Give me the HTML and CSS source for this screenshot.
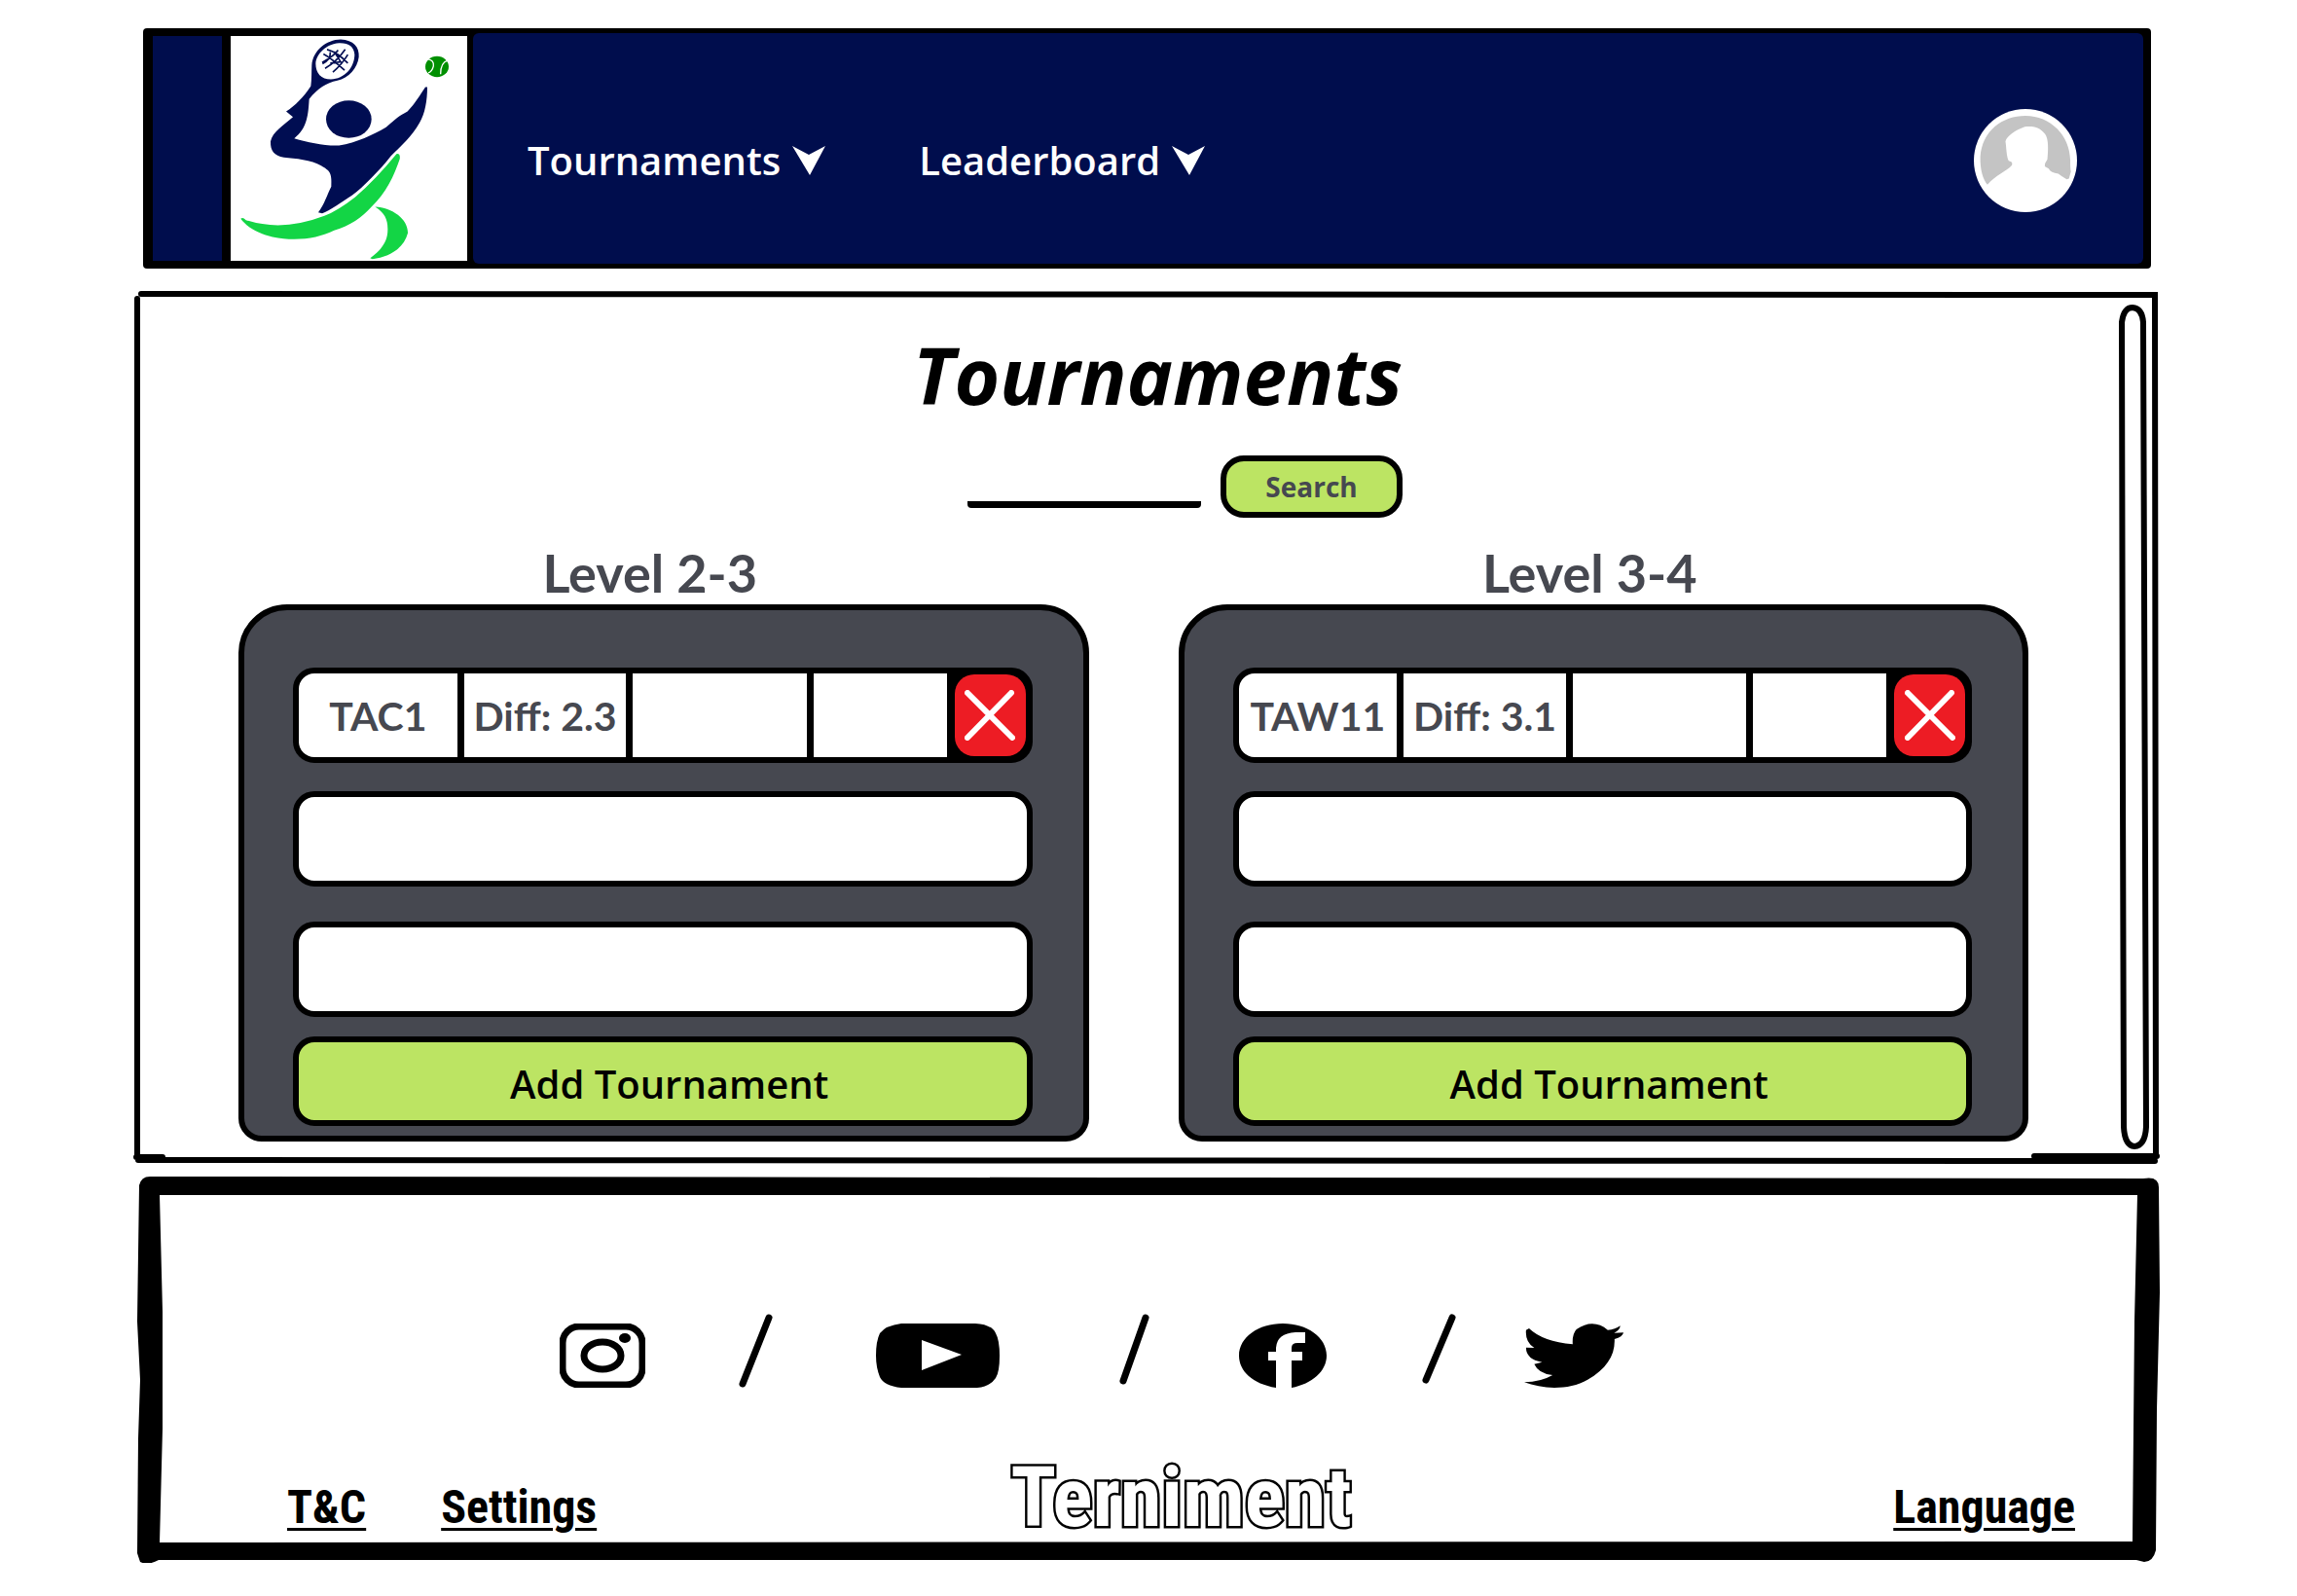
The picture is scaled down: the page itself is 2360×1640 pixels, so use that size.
FILE: index.html
```html
<!DOCTYPE html>
<html lang="en">
<head>
<meta charset="utf-8">
<meta name="viewport" content="width=device-width, initial-scale=1">
<title>Terniment – Tournaments</title>
<link rel="stylesheet" href="styles.css">
</head>
<body>
<div class="page">
  <header class="header">
    <div class="header-stub"></div>
    <a class="brand" href="#" aria-label="Terniment home">
      <svg class="brand-logo" viewBox="321 52 729 690" aria-hidden="true">
        <g fill="#000d52">
          <path fill-rule="evenodd" d="M568 205C571 185 570 160 571 140C575 95 615 62 660 61C700 63 718 85 716 115C712 150 685 180 650 188C615 195 590 212 563 245C560 290 558 335 517 366C560 378 610 390 655 388C710 380 760 355 800 332C830 305 840 297 866 283C890 258 905 232 921 208L927 208C927 250 920 290 903 318C880 360 845 390 815 420C780 465 730 515 695 542C665 562 625 590 603 597L591 594C610 570 618 540 631 515C634 470 625 465 600 450C570 433 520 428 485 425C455 418 443 405 444 375C450 345 485 325 513 300L492 283C520 265 545 240 568 205ZM583 135C583 165 600 184 630 184C672 182 702 148 703 108C702 84 685 71 655 72C615 75 585 105 583 135Z"/>
          <ellipse cx="685" cy="307" rx="70" ry="58"/>
        </g>
        <path d="M607 106Q630 118 672 156M618 92Q650 100 682 134M603 132Q640 112 652 94M612 150Q646 132 674 92M636 162Q664 138 682 108M628 100Q630 122 604 136M640 98L660 130L628 134" fill="none" stroke="#000d52" stroke-width="5"/>
        <g fill="#13d545">
          <path d="M352 614Q358 608 368 618Q480 655 610 605Q650 590 705 547Q770 490 832 414Q845 412 842 430C825 480 800 535 755 577C725 610 690 635 640 650C590 675 520 685 450 670C410 660 370 640 352 614Z"/>
          <path d="M766 577C820 580 868 615 867 658C855 705 810 732 758 738L751 735C785 710 806 685 805 645C805 615 795 595 766 577Z"/>
        </g>
        <ellipse cx="957" cy="145" rx="36" ry="32" fill="#008f00"/>
        <path d="M930 122Q948 125 946 143Q942 160 930 164M990 126Q968 132 968 168" fill="none" stroke="#fff" stroke-width="4"/>
      </svg>
    </a>
    <nav class="nav">
      <ul class="nav-list">
        <li><a class="nav-link" href="#">Tournaments
          <svg class="nav-arrow" viewBox="0 0 34 30" aria-hidden="true"><path d="M0 0L17 9L34 0L18 30Z" fill="#fff"/></svg></a></li>
        <li><a class="nav-link" href="#">Leaderboard
          <svg class="nav-arrow" viewBox="0 0 34 30" aria-hidden="true"><path d="M0 0L17 9L34 0L18 30Z" fill="#fff"/></svg></a></li>
      </ul>
      <a class="avatar" href="#" aria-label="Profile">
        <svg viewBox="142 272 320 320" aria-hidden="true">
          <circle cx="302" cy="432" r="160" fill="#fff"/>
          <path d="M184 507C170 490 161 460 162 420C168 340 230 293 302 293C380 293 440 355 441 430Q441 460 443 466L437 488L430 490Q415 482 404 473Q380 470 374 457L362 450Q361 440 370 428C375 380 370 360 363 350C345 325 320 325 300 327C270 338 245 355 240 372C243 390 243 420 250 433Q264 436 260 446C245 465 210 475 184 507Z" fill="#c4c4c4"/>
        </svg>
      </a>
    </nav>
  </header>

  <main class="main">
    <div class="content">
      <div class="hero">
        <h1 class="title">Tournaments</h1>
        <form class="search">
          <input class="search-input" type="text" aria-label="Search tournaments">
          <button class="search-button" type="button">Search</button>
        </form>
      </div>
      <div class="levels">
        <section class="level">
          <h2 class="level-title">Level 2-3</h2>
          <div class="card">
            <ul class="rows">
              <li class="row row-filled">
                <span class="cell">TAC1</span><span class="cell">Diff: 2.3</span><span class="cell"></span><span class="cell"></span>
                <button class="remove" type="button" aria-label="Remove TAC1"><svg viewBox="0 0 52 52" aria-hidden="true"><path d="M3 3L49 49M48 3L3 49"/></svg></button>
              </li>
              <li class="row"></li>
              <li class="row row-last"></li>
            </ul>
            <button class="add" type="button">Add Tournament</button>
          </div>
        </section>
        <section class="level">
          <h2 class="level-title">Level 3-4</h2>
          <div class="card">
            <ul class="rows">
              <li class="row row-filled">
                <span class="cell">TAW11</span><span class="cell">Diff: 3.1</span><span class="cell"></span><span class="cell"></span>
                <button class="remove" type="button" aria-label="Remove TAW11"><svg viewBox="0 0 52 52" aria-hidden="true"><path d="M3 3L49 49M48 3L3 49"/></svg></button>
              </li>
              <li class="row"></li>
              <li class="row row-last"></li>
            </ul>
            <button class="add" type="button">Add Tournament</button>
          </div>
        </section>
      </div>
    </div>
    <svg class="scroll" viewBox="0 0 32 868" preserveAspectRatio="none" aria-hidden="true">
      <path d="M4 18Q6 3 15 3Q25 4 26 18L29 845Q28 864 17 865Q7 864 6 845L5 500Z"/>
    </svg>
  </main>

  <footer class="footer">
    <div class="social">
      <a href="#" aria-label="Instagram"><svg width="88" height="66" viewBox="0 0 88 66"><g fill="none" stroke="#000"><rect x="3" y="3" width="82" height="60" rx="17" stroke-width="7"/><ellipse cx="44" cy="33" rx="19" ry="14" stroke-width="7"/></g><ellipse cx="67" cy="15" rx="6" ry="5"/></svg></a>
      <svg class="slash slash-1" width="35" height="76" viewBox="0 0 35 76" aria-hidden="true"><path d="M4 72L31 4"/></svg>
      <a href="#" aria-label="YouTube"><svg width="127" height="66" viewBox="0 0 127 66"><path fill-rule="evenodd" d="M26 0H102Q119 1 123 10Q127 17 127 33Q127 50 123 56Q117 65 104 66H26Q8 64 4 55Q0 45 0 33Q0 18 4 10Q10 2 26 0ZM47 17V48L88 32Z"/></svg></a>
      <svg class="slash slash-2" width="31" height="76" viewBox="0 0 31 76" aria-hidden="true"><path d="M4 69L27 4"/></svg>
      <a href="#" aria-label="Facebook"><svg width="90" height="66" viewBox="0 0 90 66"><path d="M38 66C14 62 0 49 0 33C0 14 20 0 45 0C70 0 90 14 90 33C90 49 75 62 54 66V38H65V29H54V25Q54 20 60 20H68V9H58Q39 10 38 25V29H30V38H38Z"/></svg></a>
      <svg class="slash slash-3" width="35" height="76" viewBox="0 0 35 76" aria-hidden="true"><path d="M4 68L31 4"/></svg>
      <a href="#" aria-label="Twitter"><svg width="102" height="66" viewBox="1140 122 266 198" preserveAspectRatio="none"><path d="M1153 137Q1190 178 1270 186Q1268 155 1280 140Q1325 105 1364 142Q1384 141 1397 129Q1398 140 1381 151L1406 150Q1404 164 1382 170C1384 220 1360 262 1310 295C1260 328 1190 325 1140 303Q1185 302 1216 281Q1178 276 1167 247L1188 241Q1145 232 1145 196L1167 197Q1142 180 1145 142Z"/></svg></a>
    </div>
    <div class="footer-bar">
      <div class="footer-links">
        <a class="footer-link" href="#">T&amp;C</a>
        <a class="footer-link" href="#">Settings</a>
      </div>
      <div class="wordmark">Terniment</div>
      <div class="footer-links footer-links-end">
        <a class="footer-link" href="#">Language</a>
      </div>
    </div>
  </footer>
</div>
</body>
</html>
```
FILE: styles.css
```css
:root {
  --navy: #000d4d;
  --slate: #464850;
  --lime: #bce463;
  --red: #ed1c24;
}

* { box-sizing: border-box; }

body {
  margin: 0;
  background: #fff;
  color: #000;
  font-family: "Open Sans", "Noto Sans", sans-serif;
}

svg { display: block; }
ul { list-style: none; margin: 0; padding: 0; }
a { color: inherit; }
button { font: inherit; cursor: pointer; }

.page { padding: 29px 140px 34px 136px; }

/* Header */
.header {
  display: flex;
  margin: 0 10px 0 11px;
  padding: 5px 8px 5px 10px;
  background: #000;
  border-radius: 4px;
}
.header-stub { width: 71px; margin: 3px 9px 3px 0; background: var(--navy); }
.brand { margin: 3px 6px 3px 0; background: #fff; }
.brand-logo { width: 243px; height: 231px; }
.nav {
  flex: 1;
  display: flex;
  align-items: center;
  justify-content: space-between;
  padding: 24px 68px 0 56px;
  background: var(--navy);
  border-radius: 6px;
}
.nav-list { display: flex; gap: 96px; }
.nav-link {
  display: flex;
  align-items: center;
  gap: 12px;
  color: #fff;
  font-size: 40px;
  line-height: 56px;
  font-weight: 600;
  text-decoration: none;
}
.nav-arrow { width: 34px; height: 30px; }
.avatar { width: 106px; height: 106px; }

/* Main panel, drawn with a loose pen outline */
.main {
  display: flex;
  margin-top: 23px;
  padding: 14px 12px 16px 109px;
  background: url("data:image/svg+xml,%3Csvg xmlns='http://www.w3.org/2000/svg' viewBox='0 0 2084 898' preserveAspectRatio='none'%3E%3Cg fill='none' stroke='%23000' stroke-width='6' stroke-linecap='round'%3E%3Cpath d='M9 3L2078 4L2079 888M5 8L5 889M6 893L2078 894M4 890L31 890M1954 889L2080 889'/%3E%3C/g%3E%3C/svg%3E") center / 100% 100% no-repeat;
}
.content { flex: 1; padding-right: 92px; }
.scroll { width: 32px; height: auto; align-self: stretch; fill: none; stroke: #000; stroke-width: 6; }
.hero { width: fit-content; margin: 20px auto 0; padding-left: 50px; }
.title { margin: 0; font-size: 80px; line-height: 104px; font-style: italic; font-weight: 700; }
.search { display: flex; justify-content: flex-end; gap: 20px; margin-top: 31px; }
.search-input {
  width: 240px;
  height: 54px;
  padding: 0 8px;
  border: 0;
  background: linear-gradient(#000, #000) bottom / 100% 7px no-repeat;
  border-radius: 4px;
  font-size: 28px;
}
.search-button {
  width: 187px;
  height: 64px;
  border: 6px solid #000;
  border-radius: 24px;
  background: var(--lime);
  color: var(--slate);
  font-size: 28px;
  font-weight: 700;
}

/* Level cards */
.levels { display: grid; grid-template-columns: 1fr 1fr; gap: 92px; margin-top: 25px; }
.level-title {
  margin: 0;
  padding-right: 28px;
  color: var(--slate);
  font-family: Lato, sans-serif;
  font-size: 54px;
  line-height: 64px;
  font-weight: 700;
  text-align: center;
}
.card {
  padding: 59px 52px 10px 50px;
  border: 6px solid #000;
  border-radius: 50px 50px 24px 24px;
  background: var(--slate);
}
.row {
  height: 98px;
  margin-bottom: 29px;
  border: 6px solid #000;
  border-radius: 22px;
  background: #fff;
}
.row + .row { margin-bottom: 36px; }
.row.row-last { margin-bottom: 20px; }
.row-filled {
  display: grid;
  grid-template-columns: 163fr 167fr 179fr 137fr 75fr;
  gap: 7px;
  background: #000;
}
.cell {
  display: flex;
  align-items: center;
  justify-content: center;
  background: #fff;
  color: var(--slate);
  font-family: Lato, sans-serif;
  font-size: 41px;
  font-weight: 700;
  white-space: nowrap;
}
.cell:first-child { border-radius: 16px 0 0 16px; }
.remove {
  display: flex;
  align-items: center;
  justify-content: center;
  margin: 1px;
  padding: 0;
  border: 0;
  border-radius: 20px;
  background: var(--red);
}
.remove svg { width: 52px; height: 52px; fill: none; stroke: #fff; stroke-width: 6; stroke-linecap: round; }
.add {
  display: block;
  width: 100%;
  height: 92px;
  padding: 4px 0 0 14px;
  border: 6px solid #000;
  border-radius: 22px;
  background: var(--lime);
  color: #000;
  font-size: 40px;
  font-weight: 600;
}

/* Footer, heavy marker outline */
.footer {
  margin: 11px 0 0 4px;
  padding: 142px 88px 27px 155px;
  background: url("data:image/svg+xml,%3Csvg xmlns='http://www.w3.org/2000/svg' viewBox='0 0 2080 398' preserveAspectRatio='none'%3E%3Cpath fill-rule='evenodd' d='M3 10Q5 1 14 1L1000 2L2062 3Q2078 0 2078 12L2079 120L2076 240L2075 385Q2072 397 2063 397L2055 395L23 395Q12 401 4 397L1 388L2 270L4 210L1 150ZM24 20L2056 20L2053 150L2051 376L24 377L27 260L27 140Z'/%3E%3C/svg%3E") center / 100% 100% no-repeat;
}
.social { display: flex; align-items: flex-end; gap: 70px; margin-left: 280px; }
.slash { fill: none; stroke: #000; stroke-width: 7; stroke-linecap: round; }
.slash-1 { margin: 0 36px 0 26px; }
.slash-2 { margin: 0 22px 0 53px; }
.slash-3 { margin-left: 28px; }
.footer-bar {
  display: grid;
  grid-template-columns: 1fr auto 1fr;
  align-items: end;
  margin-top: 73px;
  font-family: "Roboto Condensed", "Liberation Sans Narrow", Roboto, sans-serif;
  font-weight: 700;
}
.footer-links { display: flex; gap: 77px; }
.footer-links-end { justify-content: flex-end; }
.footer-link { font-size: 48px; line-height: 60px; text-decoration-thickness: 3px; text-underline-offset: 5px; }
.wordmark {
  font-size: 86px;
  line-height: 80px;
  color: #fff;
  -webkit-text-stroke: 5px #000;
  paint-order: stroke fill;
}
```
